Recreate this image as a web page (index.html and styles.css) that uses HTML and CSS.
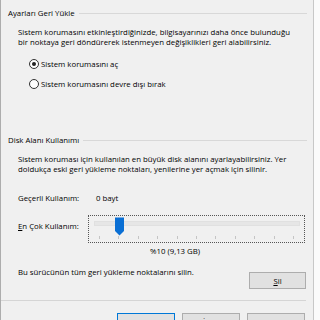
FILE: index.html
```html
<!DOCTYPE html>
<html lang="tr">
<head>
    <meta charset="UTF-8">
    <title>Sistem Koruması</title>
    <link rel="stylesheet" href="styles.css">
</head>
<body>
    <div class="page">
        <div class="group-title">Ayarları Geri Yükle</div>
        <p class="desc first">Sistem korumasını etkinleştirdiğinizde, bilgisayarınızı daha önce bulunduğu<br>bir noktaya geri döndürerek istenmeyen değişiklikleri geri alabilirsiniz.</p>
        <div class="radios">
            <label class="radio"><span class="dot checked"></span>Sistem korumasını aç</label>
            <label class="radio"><span class="dot"></span>Sistem korumasını devre dışı bırak</label>
        </div>

        <div class="group-title second">Disk Alanı Kullanımı</div>
        <p class="desc">Sistem koruması için kullanılan en büyük disk alanını ayarlayabilirsiniz. Yer<br>doldukça eski geri yükleme noktaları, yenilerine yer açmak için silinir.</p>

        <div class="row current">
            <span class="key">Geçerli Kullanım:</span>
            <span class="value">0 bayt</span>
        </div>
        <div class="row usage">
            <span class="key"><u>E</u>n Çok Kullanım:</span>
            <div class="slider">
                <div class="track"></div>
                <svg class="thumb" width="9" height="19" viewBox="0 0 9 19">
                    <path d="M0 0.5 H9 V14 L4.5 18.5 L0 14 Z" fill="#0a6fd4"/>
                </svg>
                <div class="ticks">
                    <i></i><i></i><i></i><i></i><i></i><i></i><i></i><i></i><i></i><i></i><i></i>
                </div>
            </div>
        </div>
        <div class="percent">%10 (9,13 GB)</div>

        <div class="row delete">
            <span>Bu sürücünün tüm geri yükleme noktalarını silin.</span>
            <button class="btn sil"><u>S</u>il</button>
        </div>

        <div class="separator"></div>

        <div class="actions">
            <button class="btn default">Tamam</button>
            <button class="btn">İptal</button>
            <button class="btn">Uygula</button>
        </div>
    </div>
</body>
</html>
```

FILE: styles.css
```css
body {
    margin: 0;
    padding: 0;
    width: 320px;
    height: 320px;
    overflow: hidden;
    background: #fbfbfb;
    font-family: "Open Sans", "DejaVu Sans", sans-serif;
    font-size: 7.8px;
    line-height: 10px;
    color: #000;
}
.page {
    width: 312px;
    height: 340px;
    background: #f0f0f0;
    border-left: 1px solid #adadad;
    border-right: 1px solid #c8c8c8;
}
.group-title {
    display: flex;
    align-items: center;
    padding: 8px 6px 0 7px;
    height: 10px;
}
.group-title::after {
    content: "";
    flex: 1;
    margin-left: 4px;
    border-top: 1px solid #d8d8d8;
}
.group-title.second {
    padding-top: 45px;
}
.desc {
    margin: 10px 0 0 17px;
    line-height: 9.5px;
}
.radios {
    display: flex;
    flex-direction: column;
    gap: 8px;
    margin: 11px 0 0 28px;
}
.radio {
    display: flex;
    align-items: center;
    gap: 2px;
    height: 12px;
}
.dot {
    width: 8px;
    height: 8px;
    border: 1px solid #333;
    border-radius: 50%;
    background: #fff;
    display: flex;
    align-items: center;
    justify-content: center;
}
.dot.checked::after {
    content: "";
    width: 4px;
    height: 4px;
    border-radius: 50%;
    background: #222;
}
.row {
    display: flex;
    margin-left: 17px;
}
.key {
    width: 78px;
}
.current {
    margin-top: 19px;
}
.usage {
    margin-top: 12px;
}
.usage .key {
    width: 70px;
    margin-top: 6px;
}
.slider {
    position: relative;
    width: 215px;
    height: 26px;
    border: 1px dotted #555;
}
.track {
    margin: 5px 4px 0 5px;
    height: 3px;
    background: #e6e6e6;
    border: 1px solid #e0e0e0;
}
.thumb {
    position: absolute;
    left: 26px;
    top: 1px;
}
.ticks {
    display: flex;
    justify-content: space-between;
    margin: 10px 10px 0 10px;
}
.ticks i {
    width: 1px;
    height: 3px;
    background: #c4c4c4;
}
.percent {
    margin: 3px 0 0 149px;
}
.delete {
    justify-content: space-between;
    margin-top: 11px;
    margin-right: 7px;
}
.btn {
    font-family: inherit;
    font-size: 7.8px;
    line-height: 10px;
    color: #000;
    height: 17px;
    padding: 0;
    background: #e1e1e1;
    border: 1px solid #adadad;
    border-radius: 0;
}
.sil {
    width: 57px;
    margin-top: 5px;
}
.separator {
    margin: 11px 7px 0 0;
    border-top: 1px solid #d5d5d5;
}
.actions {
    display: flex;
    justify-content: flex-end;
    gap: 7px;
    margin: 12px 8px 0 0;
}
.actions .btn {
    width: 58px;
}
.actions .default {
    border-color: #0078d7;
}
```
